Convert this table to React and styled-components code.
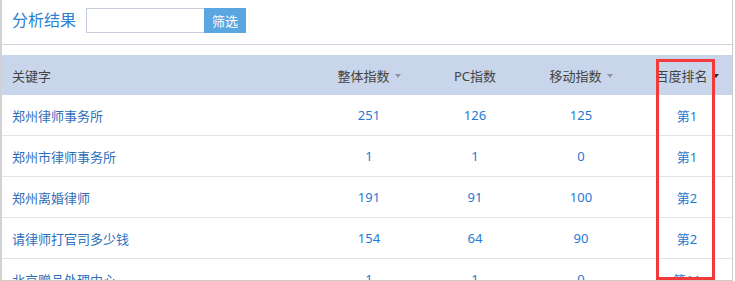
import React from 'react'
import styled, { createGlobalStyle } from 'styled-components'

const GlobalStyle = createGlobalStyle`
  body {
    margin: 0;
    background: #fff;
    font-family: "Noto Sans", "Noto Sans CJK SC", sans-serif;
  }
`

const Frame = styled.div`
  position: relative;
  width: 730px;
  height: 280px;
  border-left: 2px solid #d2d2d2;
  border-right: 1px solid #cdcdcd;
  border-bottom: 1px solid #cdcdcd;
  overflow: hidden;
`

const Toolbar = styled.div`
  display: flex;
  align-items: center;
  height: 45px;
  padding: 8px 0 0 10px;
  box-sizing: border-box;
  border-bottom: 1px solid #cfd5e0;
  align-items: flex-start;
`

const Title = styled.h2`
  margin: 0 10px 0 0;
  font-size: 16px;
  font-weight: normal;
  line-height: 25px;
  color: #2b80d5;
`

const SearchInput = styled.input`
  width: 118px;
  height: 25px;
  box-sizing: border-box;
  border: 1px solid #c6cddc;
  border-right: none;
  outline: none;
  padding: 0 6px;
`

const FilterButton = styled.button`
  width: 42px;
  height: 25px;
  border: none;
  background: #5aa6e1;
  color: #fff;
  font-family: inherit;
  font-size: 13px;
  padding: 0;
  cursor: pointer;
`

const Table = styled.div`
  margin-top: 10px;
`

const Row = styled.div`
  display: grid;
  grid-template-columns: 314px repeat(4, 106px);
  height: ${p => (p.$head ? '40px' : '40px')};
  background: ${p => (p.$head ? '#c8d5ea' : '#fff')};
  border-bottom: ${p => (p.$head ? 'none' : '1px solid #e3e3e3')};
  font-size: 13px;
`

const Cell = styled.div`
  display: flex;
  align-items: center;
  justify-content: ${p => (p.$left ? 'flex-start' : 'center')};
  padding-left: ${p => (p.$left ? '10px' : '0')};
  color: ${p => p.$color || '#1f7ad3'};
  white-space: nowrap;
`

const Arrow = styled.span`
  display: inline-block;
  margin-left: 5px;
  margin-top: 2px;
  width: 0;
  height: 0;
  border-left: 3.5px solid transparent;
  border-right: 3.5px solid transparent;
  border-top: 4px solid ${p => (p.$active ? '#333' : '#8e96a3')};
`

const Highlight = styled.div`
  position: absolute;
  left: 654px;
  top: 59px;
  width: 59px;
  height: 221px;
  box-sizing: border-box;
  border: 3px solid #f33a3a;
  pointer-events: none;
`

const columns = [
  { label: '整体指数', arrow: true },
  { label: 'PC指数' },
  { label: '移动指数', arrow: true },
  { label: '百度排名', arrow: true, active: true },
]

const rows = [
  ['郑州律师事务所', 251, 126, 125, '第1'],
  ['郑州市律师事务所', 1, 1, 0, '第1'],
  ['郑州离婚律师', 191, 91, 100, '第2'],
  ['请律师打官司多少钱', 154, 64, 90, '第2'],
  ['北京赠品处理中心', 1, 1, 0, '第11'],
]

export default function App () {
  return (
    <Frame>
      <GlobalStyle />
      <Toolbar>
        <Title>分析结果</Title>
        <SearchInput type='text' />
        <FilterButton>筛选</FilterButton>
      </Toolbar>
      <Table>
        <Row $head>
          <Cell $left $color='#444'>关键字</Cell>
          {columns.map(col => (
            <Cell key={col.label} $color='#444'>
              {col.label}
              {col.arrow && <Arrow $active={col.active} />}
            </Cell>
          ))}
        </Row>
        {rows.map(([keyword, ...values]) => (
          <Row key={keyword}>
            <Cell $left $color='#2f6fba'>{keyword}</Cell>
            {values.map((v, i) => (
              <Cell key={i}>{v}</Cell>
            ))}
          </Row>
        ))}
      </Table>
      <Highlight />
    </Frame>
  )
}
